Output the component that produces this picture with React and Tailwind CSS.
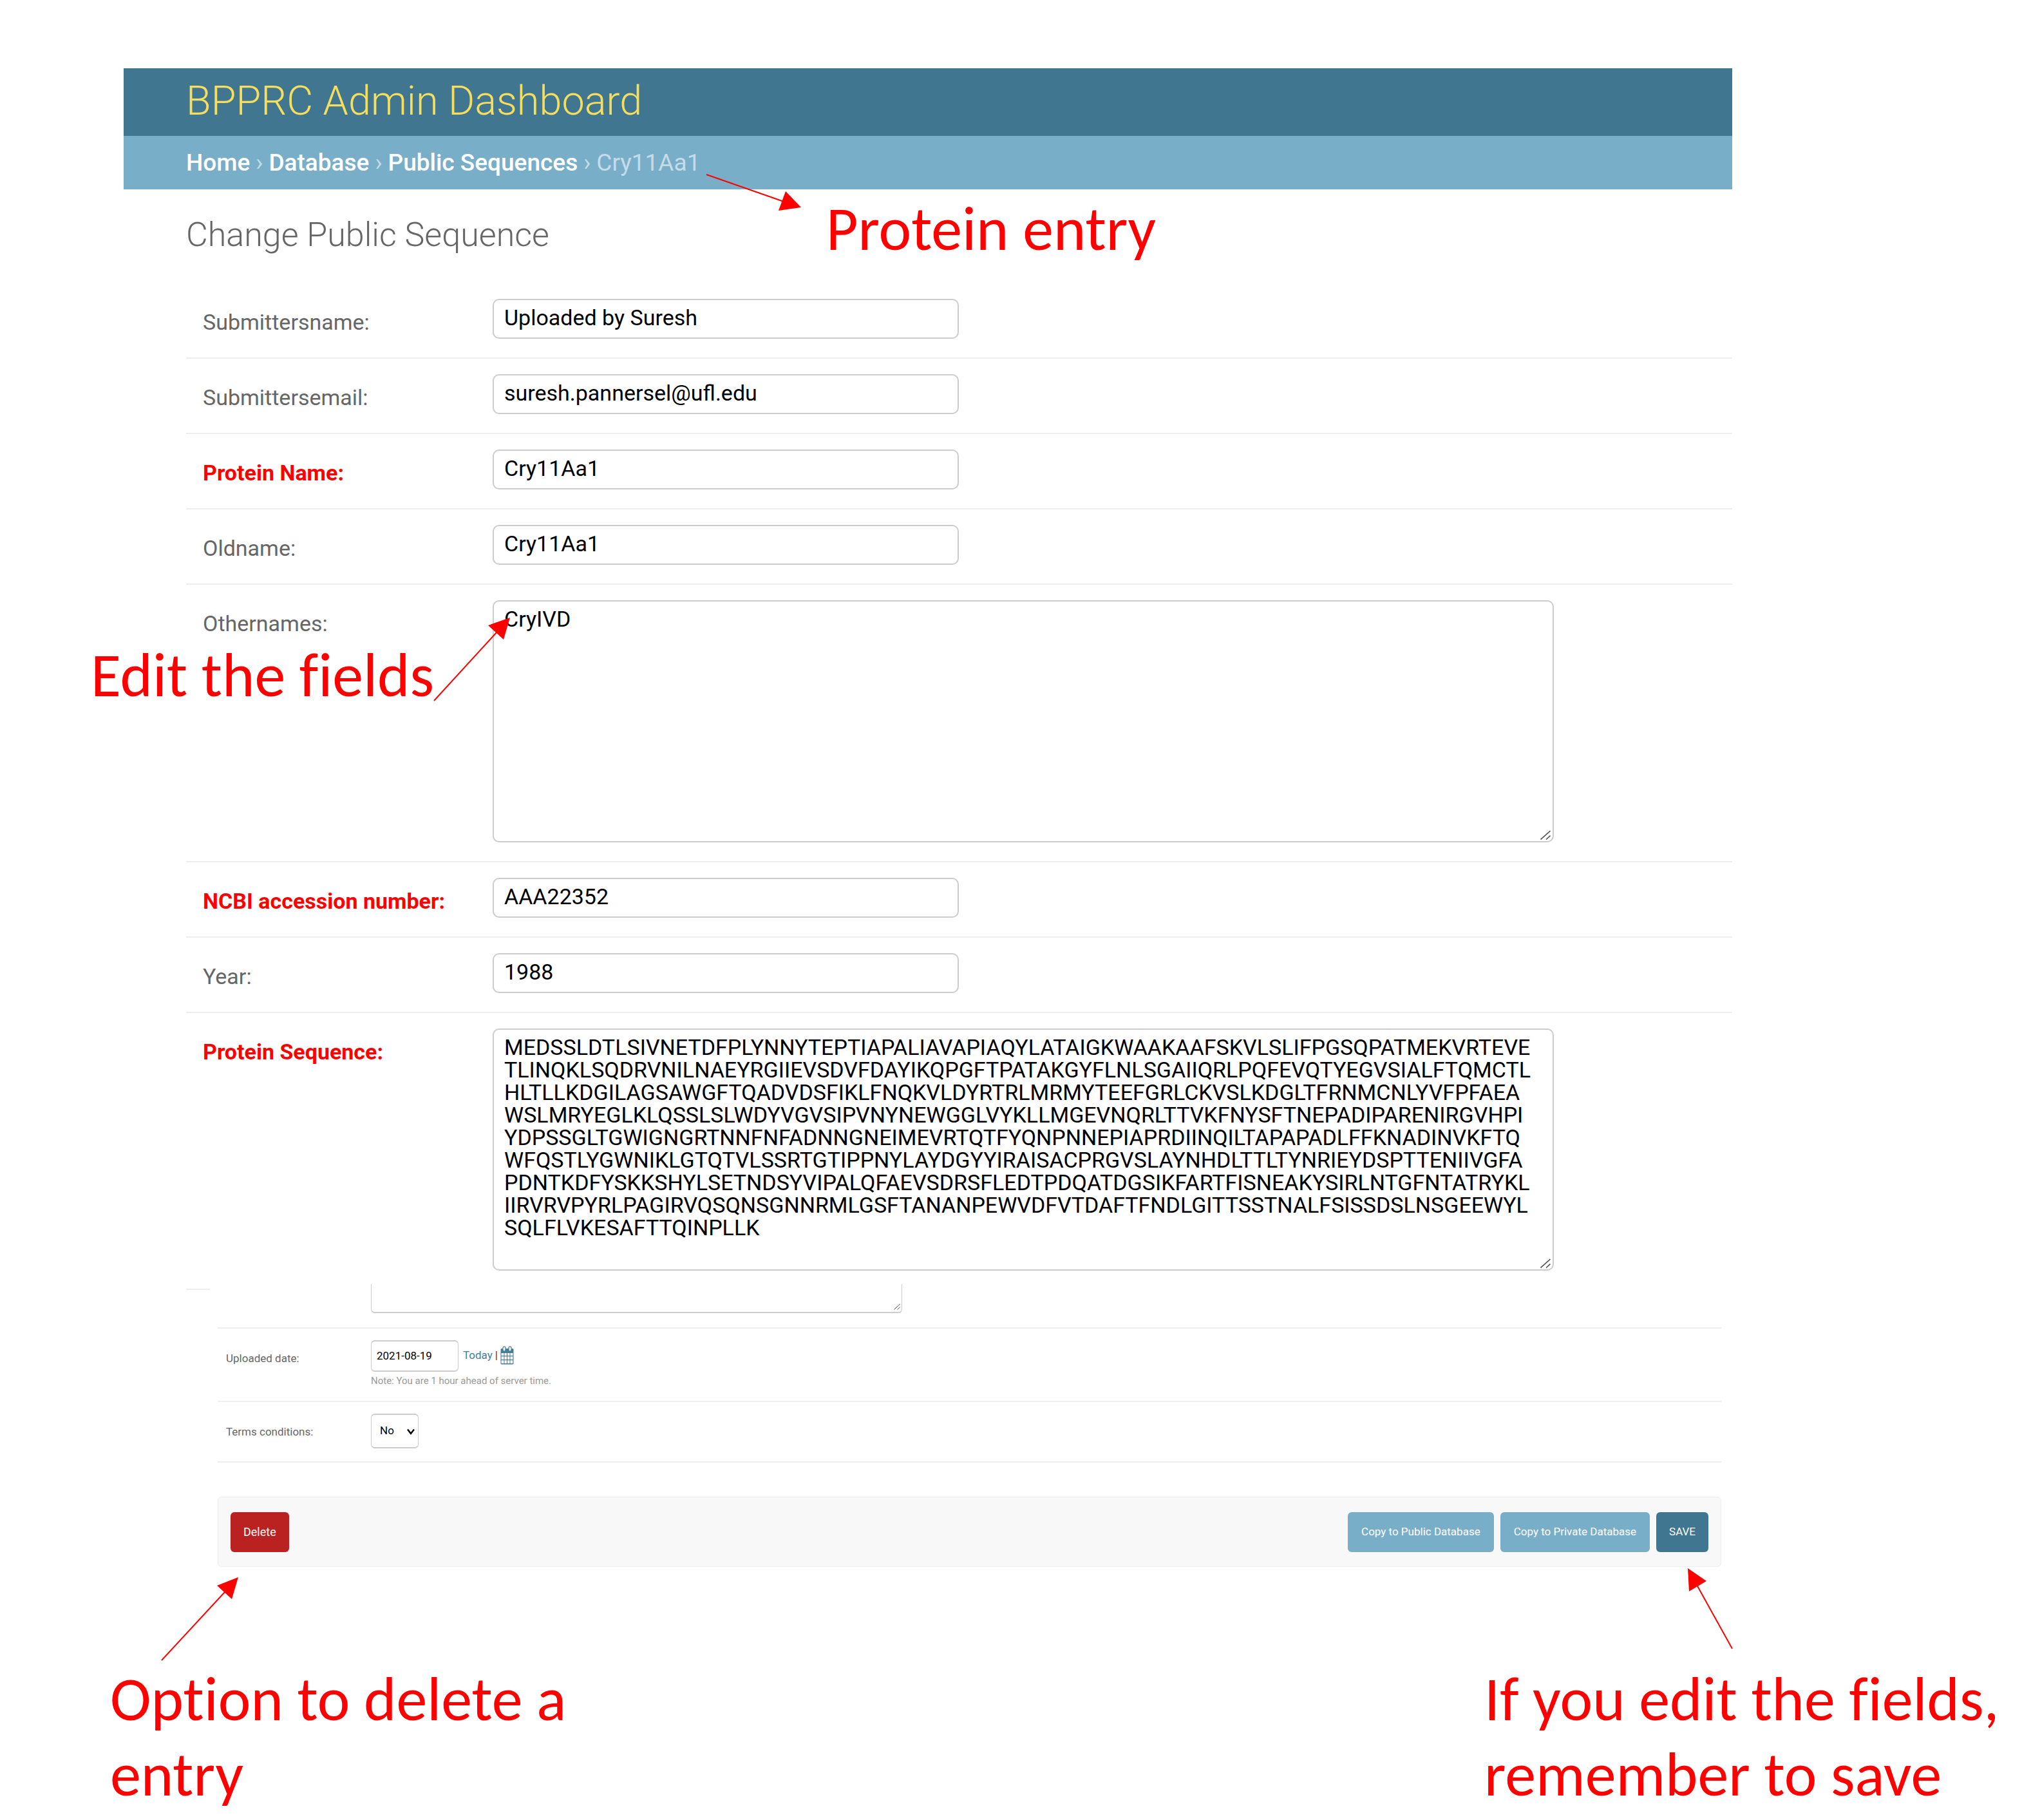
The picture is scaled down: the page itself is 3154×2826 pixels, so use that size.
import React from "react";

const SEQUENCE = [
  "MEDSSLDTLSIVNETDFPLYNNYTEPTIAPALIAVAPIAQYLATAIGKWAAKAAFSKVLSLIFPGSQPATMEKVRTEVE",
  "TLINQKLSQDRVNILNAEYRGIIEVSDVFDAYIKQPGFTPATAKGYFLNLSGAIIQRLPQFEVQTYEGVSIALFTQMCTL",
  "HLTLLKDGILAGSAWGFTQADVDSFIKLFNQKVLDYRTRLMRMYTEEFGRLCKVSLKDGLTFRNMCNLYVFPFAEA",
  "WSLMRYEGLKLQSSLSLWDYVGVSIPVNYNEWGGLVYKLLMGEVNQRLTTVKFNYSFTNEPADIPARENIRGVHPI",
  "YDPSSGLTGWIGNGRTNNFNFADNNGNEIMEVRTQTFYQNPNNEPIAPRDIINQILTAPAPADLFFKNADINVKFTQ",
  "WFQSTLYGWNIKLGTQTVLSSRTGTIPPNYLAYDGYYIRAISACPRGVSLAYNHDLTTLTYNRIEYDSPTTENIIVGFA",
  "PDNTKDFYSKKSHYLSETNDSYVIPALQFAEVSDRSFLEDTPDQATDGSIKFARTFISNEAKYSIRLNTGFNTATRYKL",
  "IIRVRVPYRLPAGIRVQSQNSGNNRMLGSFTANANPEWVDFVTDAFTFNDLGITTSSTNALFSISSDSLNSGEEWYL",
  "SQLFLVKESAFTTQINPLLK",
].join("\n");

const FIELDS = [
  { id: "submittersname", label: "Submittersname:", value: "Uploaded by Suresh" },
  { id: "submittersemail", label: "Submittersemail:", value: "suresh.pannersel@ufl.edu" },
  { id: "name", label: "Protein Name:", value: "Cry11Aa1", required: true },
  { id: "oldname", label: "Oldname:", value: "Cry11Aa1" },
  { id: "othernames", label: "Othernames:", value: "CryIVD", multiline: true },
  { id: "accession", label: "NCBI accession number:", value: "AAA22352", required: true },
  { id: "year", label: "Year:", value: "1988" },
  { id: "sequence", label: "Protein Sequence:", value: SEQUENCE, required: true, multiline: true, last: true },
];

function ResizeGrip({ className }) {
  return (
    <svg viewBox="0 0 16 15" fill="none" stroke="#555" strokeWidth="1.6" className={className} aria-hidden="true">
      <path d="M0.5 14.5 15.5 1M9 14.5 15.5 8.5" />
    </svg>
  );
}

function FieldRow({ id, label, value, required, multiline, last }) {
  return (
    <div className={last ? "flex pt-6 pb-[21px]" : "flex border-b-2 border-[#eee] pt-6 pb-[29px]"}>
      <label
        htmlFor={id}
        className={
          required
            ? "w-[476px] shrink-0 pt-4 pl-[26px] text-[34px] leading-10 font-bold text-[#f00]"
            : "w-[476px] shrink-0 pt-4 pl-[26px] text-[34px] leading-10 text-[#666]"
        }
      >
        {label}
      </label>
      {multiline ? (
        <div className="relative w-[1648px] max-w-full">
          <textarea
            id={id}
            defaultValue={value}
            spellCheck={false}
            className="block h-[376px] w-full resize-none overflow-hidden rounded-[10px] border-2 border-[#ccc] bg-white px-4 py-[10px] text-[34px] leading-[35px] whitespace-pre text-black"
          />
          <ResizeGrip className="absolute right-[5px] bottom-1 h-[15px] w-4" />
        </div>
      ) : (
        <input
          id={id}
          type="text"
          defaultValue={value}
          spellCheck={false}
          className="h-[62px] w-[724px] rounded-[10px] border-2 border-[#ccc] bg-white px-4 pb-1 text-[34px] text-black"
        />
      )}
    </div>
  );
}

function CalendarIcon() {
  return (
    <svg viewBox="0 0 21 29" className="h-[29px] w-[21px]" aria-hidden="true">
      <rect x="0.5" y="4" width="20" height="24.5" rx="1.5" fill="#447e9b" />
      <g fill="#fff">
        <rect x="1.6" y="11" width="3.9" height="4" />
        <rect x="6.5" y="11" width="3.5" height="4" />
        <rect x="11" y="11" width="3.5" height="4" />
        <rect x="15.5" y="11" width="3.9" height="4" />
        <rect x="1.6" y="16.2" width="3.9" height="4.8" />
        <rect x="6.5" y="16.2" width="3.5" height="4.8" />
        <rect x="11" y="16.2" width="3.5" height="4.8" />
        <rect x="15.5" y="16.2" width="3.9" height="4.8" />
        <rect x="1.6" y="22.2" width="3.9" height="4.8" />
        <rect x="6.5" y="22.2" width="3.5" height="4.8" />
        <rect x="11" y="22.2" width="3.5" height="4.8" />
        <rect x="15.5" y="22.2" width="3.9" height="4.8" />
      </g>
      <rect x="4" y="0.8" width="4" height="7.4" rx="2" fill="#fff" stroke="#447e9b" strokeWidth="1.2" />
      <rect x="13" y="0.8" width="4" height="7.4" rx="2" fill="#fff" stroke="#447e9b" strokeWidth="1.2" />
    </svg>
  );
}

function Arrow({ className, viewBox, line, head }) {
  return (
    <svg viewBox={viewBox} className={className} aria-hidden="true">
      <path d={line} stroke="#f00" strokeWidth="2" fill="none" />
      <path d={head} fill="#f00" />
    </svg>
  );
}

const NOTE = "font-['Carlito','Calibri','Lato',sans-serif] text-[96px] leading-[117px] text-[#f00] [font-variant-ligatures:none]";

export default function App() {
  return (
    <div className="relative min-h-screen bg-white pt-[106px] pb-3 font-['Roboto',sans-serif]">
      <div className="mr-[464px] ml-48">
        <header className="flex h-[105px] items-center bg-[#417690] pb-1 pl-[97px]">
          <h1 className="text-[63px] leading-none font-[350] text-[#f5dd5d]">BPPRC Admin Dashboard</h1>
        </header>
        <nav aria-label="Breadcrumbs" className="flex h-[83px] items-center gap-[9px] bg-[#79aec8] pl-[97px] text-[37px] text-[#c4dce8]">
          <a href="#home" className="font-medium text-white">Home</a>
          <span>›</span>
          <a href="#database" className="font-medium text-white">Database</a>
          <span>›</span>
          <a href="#sequences" className="font-medium text-white">Public Sequences</a>
          <span>›</span>
          <span>Cry11Aa1</span>
        </nav>

        <main className="pl-[97px]">
          <h2 className="pt-[41px] pb-[45px] text-[52px] leading-[60px] font-[350] text-[#666]">Change Public Sequence</h2>
          <form onSubmit={(e) => e.preventDefault()}>
            {FIELDS.map((f) => (
              <FieldRow key={f.id} {...f} />
            ))}

            <div className="flex gap-3 pr-[17px]">
              <div className="mt-[7px] h-0.5 w-[37px] shrink-0 bg-[#eee]" />
              <div className="grow text-[17px]">
                <div className="border-b-2 border-[#eee] pb-[22px] pl-[238px]">
                  <div className="relative h-[45px] w-[825px] rounded-b-[6px] border-x border-b-2 border-[#ccc]">
                    <ResizeGrip className="absolute right-0.5 bottom-0.5 h-3 w-2.5" />
                  </div>
                </div>

                <div className="flex border-b-2 border-[#eee] pt-[18px] pb-[17px]">
                  <label htmlFor="uploaded" className="w-[238px] shrink-0 pt-4 pl-[13px] leading-6 text-[#666]">
                    Uploaded date:
                  </label>
                  <div>
                    <div className="flex items-center">
                      <input
                        id="uploaded"
                        type="text"
                        defaultValue="2021-08-19"
                        className="h-[49px] w-[136px] rounded-[6px] border-x border-y-2 border-[#ccc] bg-white px-2 pb-0.5 text-black"
                      />
                      <a href="#today" className="ml-[7px] pb-0.5 text-[#447e9b]">Today</a>
                      <span className="mx-1 pb-0.5 text-[#333]">|</span>
                      <button type="button" aria-label="Choose a date" className="pb-0.5">
                        <CalendarIcon />
                      </button>
                    </div>
                    <p className="text-[15px] leading-7 text-[#999]">Note: You are 1 hour ahead of server time.</p>
                  </div>
                </div>

                <div className="flex border-b-2 border-[#eee] pt-[18px] pb-5">
                  <label htmlFor="terms" className="w-[238px] shrink-0 pt-4 pl-[13px] leading-6 text-[#666]">
                    Terms conditions:
                  </label>
                  <div className="relative">
                    <select
                      id="terms"
                      defaultValue="No"
                      className="h-[54px] w-[74px] appearance-none rounded-[6px] border-x border-y-2 border-[#ccc] bg-white pl-[13px] text-black"
                    >
                      <option>No</option>
                      <option>Yes</option>
                    </select>
                    <svg viewBox="0 0 12 10" fill="none" stroke="#000" strokeWidth="2.4" className="pointer-events-none absolute top-[23px] right-1.5 h-2.5 w-3" aria-hidden="true">
                      <path d="M1 1.5 6 8 11 1.5" />
                    </svg>
                  </div>
                </div>

                <div className="mt-[53px] flex h-[109px] items-center gap-2.5 rounded-[6px] border border-[#eee] bg-[#f8f8f8] px-[19px] text-white">
                  <button type="button" className="mr-auto h-[62px] rounded-[6px] bg-[#ba2121] px-5 text-[18px]">Delete</button>
                  <button type="button" className="h-[62px] rounded-[6px] bg-[#79aec8] px-[21px]">Copy to Public Database</button>
                  <button type="button" className="h-[62px] rounded-[6px] bg-[#79aec8] px-[21px]">Copy to Private Database</button>
                  <button type="submit" className="h-[62px] rounded-[6px] bg-[#417690] px-5">SAVE</button>
                </div>
              </div>
            </div>
          </form>
        </main>
      </div>

      <div className="mt-[147px] flex justify-between pl-[171px]">
        <p className={NOTE + " max-w-[760px]"}>Option to delete a entry</p>
        <p className={NOTE + " w-[849px]"}>If you edit the fields, remember to save</p>
      </div>

      <p className={NOTE + " absolute top-[297px] left-[1283px]"}>Protein entry</p>
      <p className={NOTE + " absolute top-[990px] left-[141px]"}>Edit the fields</p>

      <Arrow
        className="pointer-events-none absolute top-[268px] left-[1094px] h-[62px] w-[152px]"
        viewBox="1094 268 152 62"
        line="M1097 271 1217 313"
        head="M1244 322 1220 297 1209 327Z"
      />
      <Arrow
        className="pointer-events-none absolute top-[956px] left-[670px] h-[136px] w-[126px]"
        viewBox="670 956 126 136"
        line="M674 1088 772 981"
        head="M792 959 758 971 782 993Z"
      />
      <Arrow
        className="pointer-events-none absolute top-[2446px] left-[248px] h-[136px] w-[126px]"
        viewBox="248 2446 126 136"
        line="M251 2578 350 2471"
        head="M370 2449 337 2462 360 2483Z"
      />
      <Arrow
        className="pointer-events-none absolute top-[2432px] left-[2616px] h-[132px] w-[78px]"
        viewBox="2616 2432 78 132"
        line="M2690 2560 2635 2461"
        head="M2621 2435 2650 2455 2623 2471Z"
      />
    </div>
  );
}
